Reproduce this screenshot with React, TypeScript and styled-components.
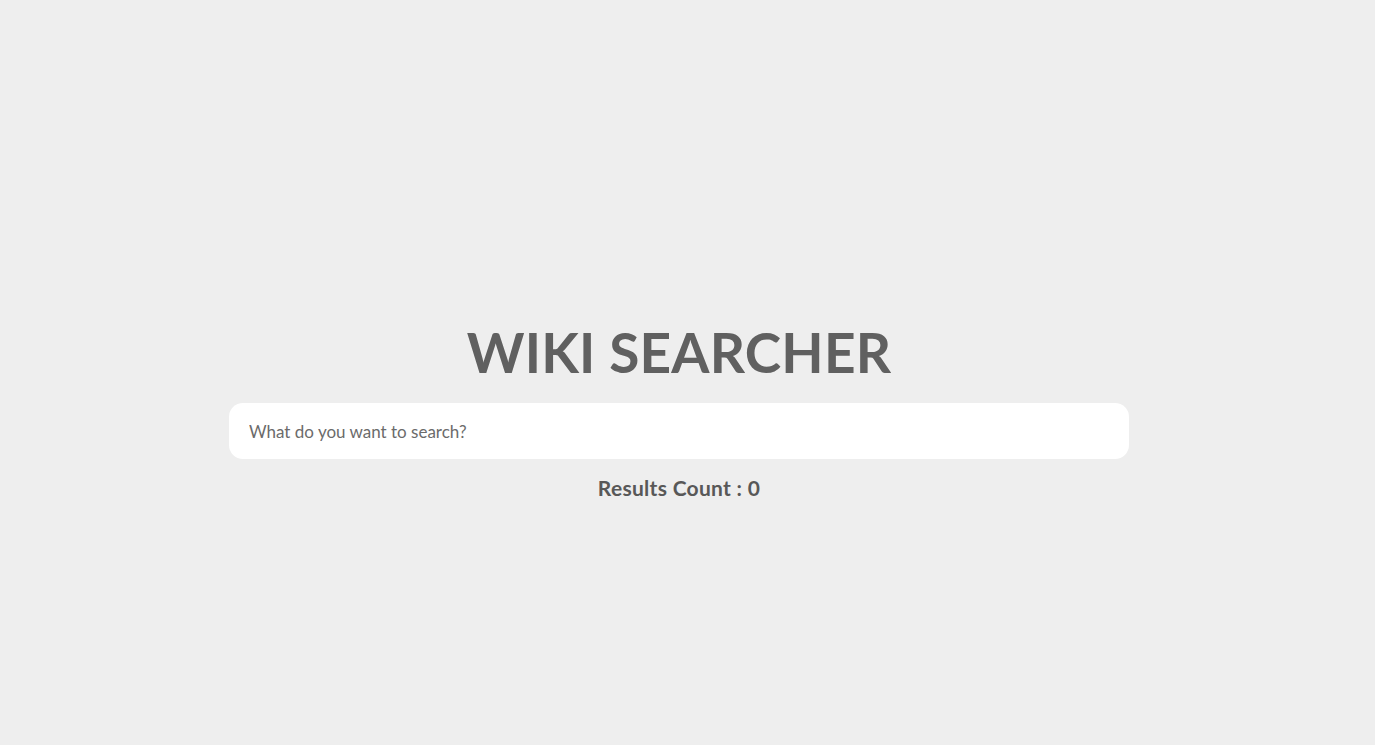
import React, { useState } from 'react';
import styled, { createGlobalStyle } from 'styled-components';

const GlobalStyle = createGlobalStyle`
  html, body {
    margin: 0;
    padding: 0;
    background-color: #eeeeee;
    font-family: 'Lato', 'Noto Sans', sans-serif;
  }
`;

// the right padding leaves room the width of a scrollbar, as in the original
const Page = styled.main`
  display: flex;
  flex-direction: column;
  align-items: center;
  min-height: 100vh;
  padding: 318px 17px 0 0;
  box-sizing: border-box;
`;

const Title = styled.h1`
  margin: 0;
  color: #606060;
  font-size: 55px;
  font-weight: 700;
  line-height: 68px;
  letter-spacing: 0.2px;
`;

const SearchInput = styled.input`
  width: 900px;
  height: 56px;
  margin-top: 17px;
  padding: 0 20px;
  box-sizing: border-box;
  border: none;
  border-radius: 14px;
  background-color: #ffffff;
  color: #555555;
  font-family: inherit;
  font-size: 17px;
  outline: none;

  &::placeholder {
    color: #6b6b6b;
  }
`;

const ResultsCount = styled.p`
  margin: 16px 0 0;
  color: #585858;
  font-size: 21px;
  font-weight: 700;
  letter-spacing: 0.3px;
`;

export default function App() {
  const [query, setQuery] = useState('');

  return (
    <>
      <GlobalStyle />
      <Page>
        <Title>WIKI SEARCHER</Title>
        <SearchInput
          type="text"
          value={query}
          onChange={e => setQuery(e.target.value)}
          placeholder="What do you want to search?"
        />
        <ResultsCount>Results Count : 0</ResultsCount>
      </Page>
    </>
  );
}
